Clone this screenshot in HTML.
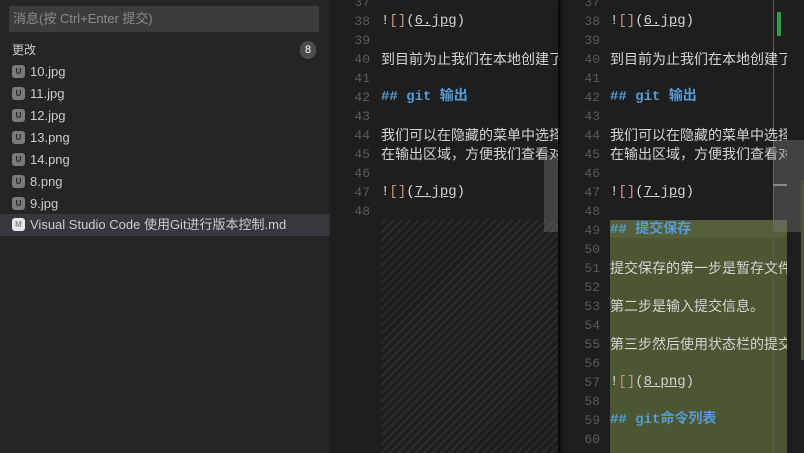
<!DOCTYPE html>
<html><head><meta charset="utf-8"><style>
*{margin:0;padding:0;box-sizing:border-box}
body{width:804px;height:453px;overflow:hidden;background:#1e1e1e;position:relative;font-family:"Liberation Sans","Noto Sans CJK SC",sans-serif}
#side{position:absolute;left:0;top:0;width:330px;height:453px;background:#252526}
#msg{position:absolute;left:9px;top:6px;width:310px;height:26px;background:#3c3c3c;color:#8a8a8a;font-size:13px;line-height:26px;padding-left:4px}
#chg{position:absolute;left:12px;top:41px;color:#ccc;font-size:12px}
#badge{position:absolute;left:300px;top:41px;width:16px;height:18px;border-radius:9px;background:#4d4d4d;color:#fff;font-size:11px;text-align:center;line-height:18px}
.f{position:absolute;left:0;width:330px;height:22px;line-height:22px;color:#ccc;font-size:13px;padding-left:30px;margin-top:1px}
.f i{position:absolute;left:12px;top:4px;width:13px;height:13px;border-radius:3px;background:#7a7a7a;color:#252526;font-style:normal;font-size:8px;line-height:13px;text-align:center;font-weight:bold}
.sel{background:#37373d;margin-top:0}
.sel i{background:#e8e8e8;color:#888}
.pane{position:absolute;top:0;height:453px;background:#1e1e1e;overflow:hidden}
.ln{position:absolute;width:40px;text-align:right;color:#5a5a5a;font-family:"Liberation Mono",monospace;font-size:13px;height:19px;line-height:19px;margin-top:3px}
.tx{position:absolute;white-space:nowrap;color:#d4d4d4;font-size:14px;height:19px;line-height:19px;font-family:"Liberation Mono","Noto Sans CJK SC",monospace;margin-top:3px}
.h{color:#569cd6;font-weight:bold}
.b{color:#ce9178}
.u{text-decoration:underline;color:#d4d4d4}
.cj{font-family:"Liberation Sans","Noto Sans CJK SC",sans-serif}
</style></head><body>
<div id="side">
<div id="msg">消息(按 Ctrl+Enter 提交)</div>
<div id="chg">更改</div><div id="badge">8</div>
<div class="f" style="top:60px"><i>U</i>10.jpg</div>
<div class="f" style="top:82px"><i>U</i>11.jpg</div>
<div class="f" style="top:104px"><i>U</i>12.jpg</div>
<div class="f" style="top:126px"><i>U</i>13.png</div>
<div class="f" style="top:148px"><i>U</i>14.png</div>
<div class="f" style="top:170px"><i>U</i>8.png</div>
<div class="f" style="top:192px"><i>U</i>9.jpg</div>
<div class="f sel" style="top:214px"><i>M</i>Visual Studio Code 使用Git进行版本控制.md</div>
</div>

<div class="pane" style="left:330px;width:228px;box-shadow:2px 0 4px #000;z-index:2">
<div style="position:absolute;left:51px;top:220px;width:177px;height:233px;background:repeating-linear-gradient(-45deg,#1e1e1e 0 4px,#2c2c2c 4px 6px)"></div>
<div class="ln" style="left:0;top:-10px">37</div>
<div class="ln" style="left:0;top:9px">38</div><div class="tx" style="left:51px;top:9px">!<span class="b">[]</span>(<span class="u">6.jpg</span>)</div>
<div class="ln" style="left:0;top:28px">39</div>
<div class="ln" style="left:0;top:47px">40</div><div class="tx cj" style="left:51px;top:47px">到目前为止我们在本地创建了</div>
<div class="ln" style="left:0;top:66px">41</div>
<div class="ln" style="left:0;top:85px">42</div><div class="tx h" style="left:51px;top:85px">## git 输出</div>
<div class="ln" style="left:0;top:104px">43</div>
<div class="ln" style="left:0;top:123px">44</div><div class="tx cj" style="left:51px;top:123px">我们可以在隐藏的菜单中选择</div>
<div class="ln" style="left:0;top:142px">45</div><div class="tx cj" style="left:51px;top:142px">在输出区域，方便我们查看对</div>
<div class="ln" style="left:0;top:161px">46</div>
<div class="ln" style="left:0;top:180px">47</div><div class="tx" style="left:51px;top:180px">!<span class="b">[]</span>(<span class="u">7.jpg</span>)</div>
<div class="ln" style="left:0;top:199px">48</div>
<div style="position:absolute;left:214px;top:155px;width:14px;height:77px;background:rgba(121,121,121,.4)"></div>
</div>

<div class="pane" style="left:558px;width:246px">
<div style="position:absolute;left:52px;top:220px;width:177px;height:233px;background:#4b5632"></div>
<div style="position:absolute;left:52px;top:220px;width:177px;height:18px;background:#55603a"></div>
<div style="position:absolute;left:215px;top:0;width:1px;height:453px;background:#5a5a5a"></div>
<div style="position:absolute;left:219px;top:12px;width:4px;height:24px;background:#2ea043"></div>
<div class="ln" style="left:2px;top:-10px">37</div>
<div class="ln" style="left:2px;top:9px">38</div><div class="tx" style="left:52px;top:9px">!<span class="b">[]</span>(<span class="u">6.jpg</span>)</div>
<div class="ln" style="left:2px;top:28px">39</div>
<div class="ln" style="left:2px;top:47px">40</div><div class="tx cj" style="left:52px;top:47px">到目前为止我们在本地创建了</div>
<div class="ln" style="left:2px;top:66px">41</div>
<div class="ln" style="left:2px;top:85px">42</div><div class="tx h" style="left:52px;top:85px">## git 输出</div>
<div class="ln" style="left:2px;top:104px">43</div>
<div class="ln" style="left:2px;top:123px">44</div><div class="tx cj" style="left:52px;top:123px">我们可以在隐藏的菜单中选择</div>
<div class="ln" style="left:2px;top:142px">45</div><div class="tx cj" style="left:52px;top:142px">在输出区域，方便我们查看对</div>
<div class="ln" style="left:2px;top:161px">46</div>
<div class="ln" style="left:2px;top:180px">47</div><div class="tx" style="left:52px;top:180px">!<span class="b">[]</span>(<span class="u">7.jpg</span>)</div>
<div class="ln" style="left:2px;top:199px">48</div>
<div class="ln" style="left:2px;top:218px">49</div><div class="tx h" style="left:52px;top:218px">## 提交保存</div>
<div class="ln" style="left:2px;top:237px">50</div>
<div class="ln" style="left:2px;top:256px">51</div><div class="tx cj" style="left:52px;top:256px">提交保存的第一步是暂存文件</div>
<div class="ln" style="left:2px;top:275px">52</div>
<div class="ln" style="left:2px;top:294px">53</div><div class="tx cj" style="left:52px;top:294px">第二步是输入提交信息。</div>
<div class="ln" style="left:2px;top:313px">54</div>
<div class="ln" style="left:2px;top:332px">55</div><div class="tx cj" style="left:52px;top:332px">第三步然后使用状态栏的提交</div>
<div class="ln" style="left:2px;top:351px">56</div>
<div class="ln" style="left:2px;top:370px">57</div><div class="tx" style="left:52px;top:370px">!<span class="b">[]</span>(<span class="u">8.png</span>)</div>
<div class="ln" style="left:2px;top:389px">58</div>
<div class="ln" style="left:2px;top:408px">59</div><div class="tx h" style="left:52px;top:408px">## git命令列表</div>
<div class="ln" style="left:2px;top:427px">60</div>
<div class="ln" style="left:2px;top:446px">61</div>
<div style="position:absolute;left:229px;top:0;width:17px;height:453px;background:#1e1e1e"></div>
<div style="position:absolute;left:215px;top:140px;width:31px;height:92px;background:rgba(121,121,121,.4)"></div>
<div style="position:absolute;left:215px;top:184px;width:14px;height:2px;background:#888"></div>
<div style="position:absolute;left:243px;top:180px;width:3px;height:180px;background:#4b5632"></div>
</div>
</body></html>
